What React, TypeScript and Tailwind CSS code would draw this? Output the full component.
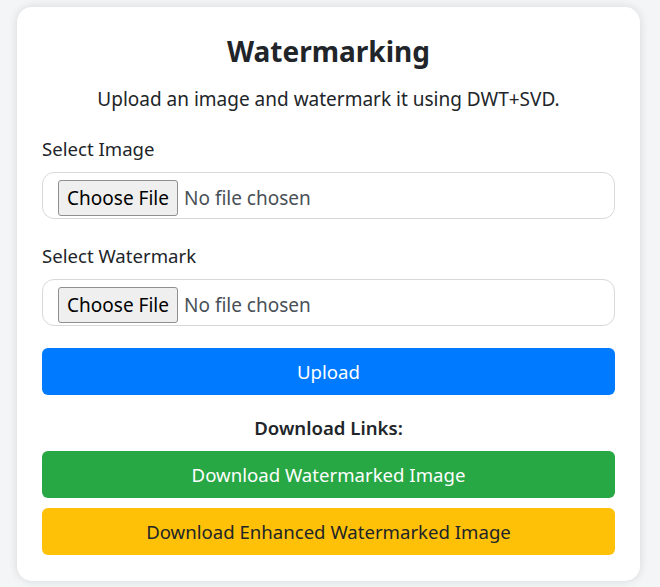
import React from "react";

function FileRow() {
  return (
    <div className="mt-[10px] flex h-[47px] items-start rounded-[12px] border border-[#d6d9dc] bg-white pl-[15px] pt-[7px]">
      <button className="h-[36px] w-[120px] rounded-[3px] border border-[#8f8f8f] bg-[#efefef] text-[19px] leading-[34px] text-black">
        Choose File
      </button>
      <span className="ml-[6px] text-[19px] leading-[36px] text-[#495057]">No file chosen</span>
    </div>
  );
}

export default function App() {
  return (
    <div
      className="min-h-[587px] bg-[#f4f5f7] pt-[7px] pl-[17px]"
      style={{ fontFamily: '"Noto Sans", "Open Sans", sans-serif' }}
    >
      <div className="w-[623px] rounded-[15px] bg-white px-[25px] pt-[27px] pb-[26px] text-[#212529] shadow-[0_0_10px_rgba(0,0,0,0.12)]">
        <h1 className="text-center text-[28px] font-bold leading-[34px]">Watermarking</h1>
        <p className="mt-[18px] text-center text-[19px] leading-[27px]">
          Upload an image and watermark it using DWT+SVD.
        </p>
        <div className="mt-[22px] text-[18.6px] leading-[27px]">Select Image</div>
        <FileRow />
        <div className="mt-[23px] text-[18.6px] leading-[27px]">Select Watermark</div>
        <FileRow />
        <button className="mt-[22px] flex h-[47px] w-full items-center justify-center rounded-[6px] bg-[#007bff] text-[18.6px] text-white">
          Upload
        </button>
        <div className="mt-[19px] text-center text-[18.6px] font-semibold leading-[27px]">Download Links:</div>
        <button className="mt-[10px] flex h-[47px] w-full items-center justify-center rounded-[6px] bg-[#28a745] text-[18.6px] text-white">
          Download Watermarked Image
        </button>
        <button className="mt-[10px] flex h-[47px] w-full items-center justify-center rounded-[6px] bg-[#ffc107] text-[18.6px] text-[#212529]">
          Download Enhanced Watermarked Image
        </button>
      </div>
    </div>
  );
}
